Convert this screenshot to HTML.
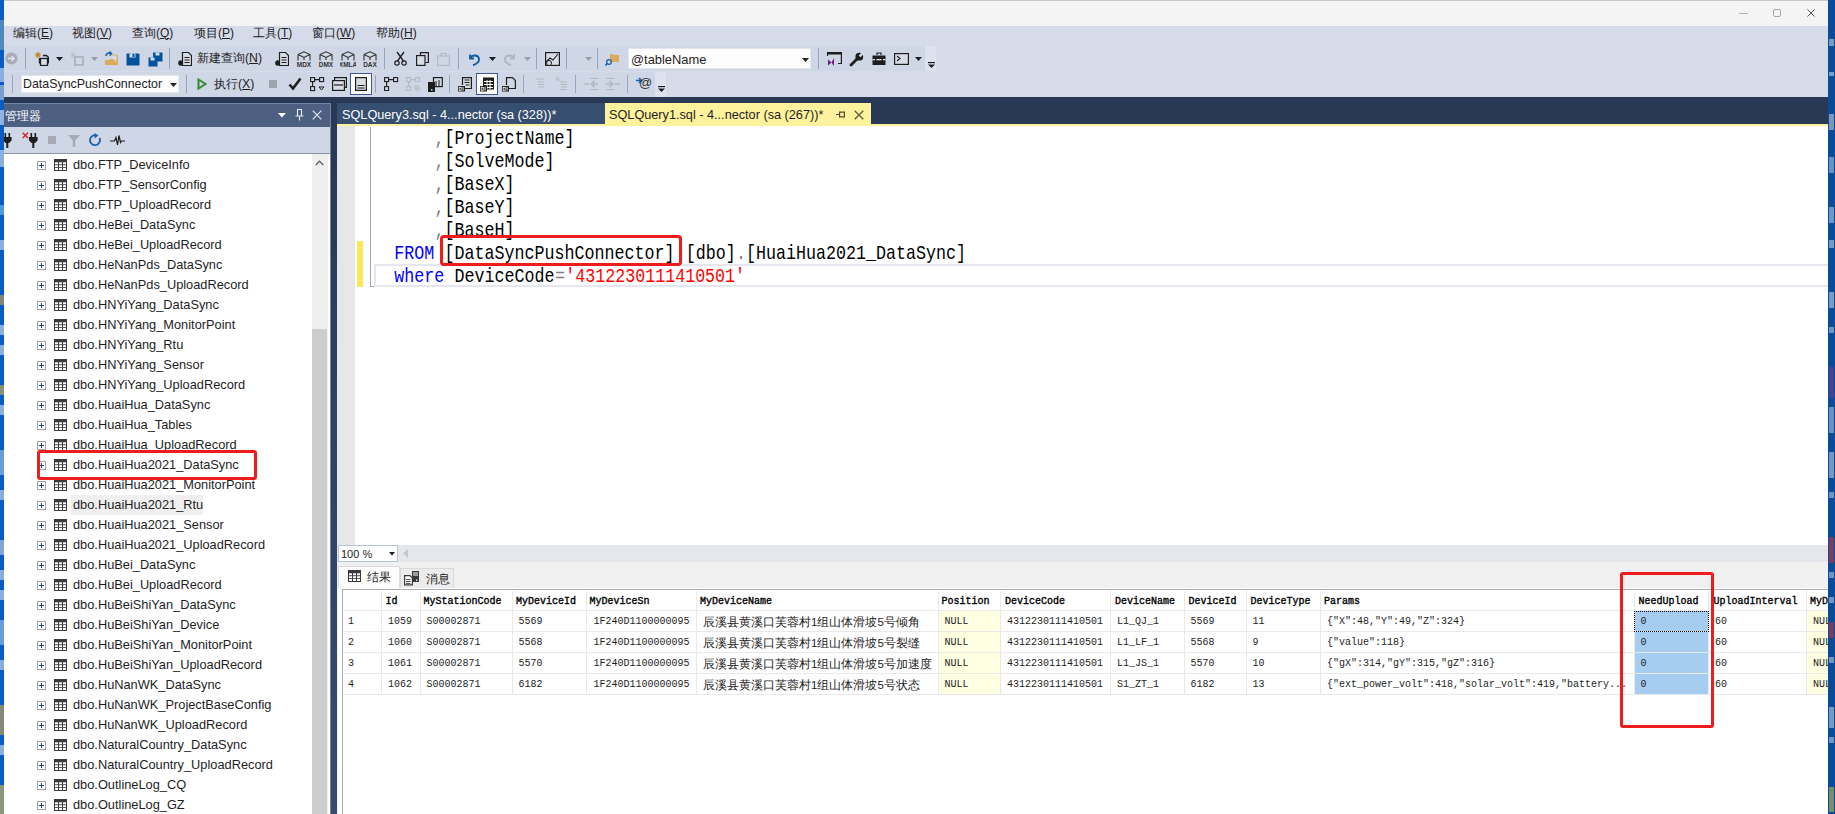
<!DOCTYPE html>
<html><head><meta charset="utf-8">
<style>
*{box-sizing:border-box;margin:0;padding:0}
html,body{width:1835px;height:814px;overflow:hidden;background:#0c4a92;font-family:"Liberation Sans",sans-serif;color:#1e1e1e}
.a{position:absolute}
.t{position:absolute;white-space:pre;line-height:1}
u{text-decoration-thickness:1px;text-underline-offset:1px}
.ui{font-size:12.4px}
.code{font-family:"Liberation Mono",monospace;font-size:16.67px;line-height:23px;white-space:pre;position:absolute;transform:scaleY(1.22);transform-origin:0 16px}
.g{font-family:"Liberation Mono",monospace;font-size:10px;white-space:pre;position:absolute;line-height:1}
.gh{font-family:"Liberation Mono",monospace;font-size:10px;-webkit-text-stroke:0.35px #000;color:#000;white-space:pre;position:absolute;line-height:1}
</style></head><body>

<div class="a" style="left:0px;top:0px;width:1828px;height:814px;background:#d6dbe9"></div>
<div class="a" style="left:0px;top:0px;width:1828px;height:26px;background:#f4f4f4;border-top:1px solid #c9c9c9"></div>
<div class="a" style="left:1739px;top:12.5px;width:9px;height:1.5px;background:#b0b0b0"></div>
<div class="a" style="left:1773px;top:9px;width:8px;height:8px;border:1px solid #a6a6a6;border-radius:2px"></div>
<svg class="a" style="left:1807px;top:9px;" width="8" height="8" viewBox="0 0 8 8"><path d="M0.5 0.5L7.5 7.5M7.5 0.5L0.5 7.5" stroke="#505050" stroke-width="1"/></svg>
<div class="t" style="left:13px;top:26.5px;font-size:12px;line-height:13px;color:#1e1e1e">编辑(<u>E</u>)</div>
<div class="t" style="left:72px;top:26.5px;font-size:12px;line-height:13px;color:#1e1e1e">视图(<u>V</u>)</div>
<div class="t" style="left:132px;top:26.5px;font-size:12px;line-height:13px;color:#1e1e1e">查询(<u>Q</u>)</div>
<div class="t" style="left:194px;top:26.5px;font-size:12px;line-height:13px;color:#1e1e1e">项目(<u>P</u>)</div>
<div class="t" style="left:253px;top:26.5px;font-size:12px;line-height:13px;color:#1e1e1e">工具(<u>T</u>)</div>
<div class="t" style="left:312px;top:26.5px;font-size:12px;line-height:13px;color:#1e1e1e">窗口(<u>W</u>)</div>
<div class="t" style="left:376px;top:26.5px;font-size:12px;line-height:13px;color:#1e1e1e">帮助(<u>H</u>)</div>
<div class="a" style="left:4px;top:46px;width:921px;height:25px;background:#cfd6e5"></div>
<div class="a" style="left:925px;top:46px;width:11px;height:25px;background:#dde2ee"></div>
<div class="a" style="left:4px;top:72px;width:651px;height:25px;background:#cfd6e5"></div>
<div class="a" style="left:655px;top:72px;width:11px;height:25px;background:#dde2ee"></div>
<div class="a" style="left:0px;top:97px;width:1828px;height:717px;background:#293955"></div>
<svg class="a" style="left:5px;top:52px;" width="13" height="13" viewBox="0 0 13 13"><circle cx="6.5" cy="6.5" r="6" fill="#a9acb4"/><path d="M3 6.5H9M6.5 4L9 6.5L6.5 9" stroke="#dfe3ec" stroke-width="1.6" fill="none"/></svg>
<div class="a" style="left:25px;top:48px;width:1px;height:21px;background:#9ba4b9"></div>
<svg class="a" style="left:35px;top:51px;" width="14" height="15" viewBox="0 0 14 15"><path d="M0.8 1.8L5.2 6.2M5.2 1.8L0.8 6.2M3 0.8V7.2M0 4H6" stroke="#c27d0e" stroke-width="0.9"/><circle cx="3" cy="4" r="1.4" fill="#c27d0e"/><path d="M4.5 7V12.5M8 4.5H11.5L13.5 6.5V12.5" stroke="#1e1e1e" stroke-width="1.3" fill="none"/><rect x="5.5" y="7.5" width="7" height="7" fill="#d8dce6" stroke="#1e1e1e" stroke-width="1.3"/></svg>
<svg class="a" style="left:56px;top:57px;" width="7" height="4" viewBox="0 0 7 4"><path d="M0 0H7L3.5 4Z" fill="#1e1e1e"/></svg>
<svg class="a" style="left:70px;top:51px;" width="15" height="15" viewBox="0 0 15 15"><path d="M1 2L5 6M5 2L1 6M3 1V7M0.5 4H5.5" stroke="#b9bdc8" stroke-width="1"/><rect x="5" y="6" width="8" height="8" fill="none" stroke="#a9aeba" stroke-width="1.6"/></svg>
<svg class="a" style="left:91px;top:57px;" width="7" height="4" viewBox="0 0 7 4"><path d="M0 0H7L3.5 4Z" fill="#9a9ea8"/></svg>
<svg class="a" style="left:104px;top:51px;" width="15" height="15" viewBox="0 0 15 15"><path d="M1 9H5L6 8H14V14H1Z" fill="#dcaa5a"/><path d="M6 4H13V12" stroke="#dcaa5a" stroke-width="1.2" fill="#d8dce6"/><path d="M2 5C2 2 5 1.5 7 2.5M5.5 0.5L7.5 2.5L5.5 4.5" stroke="#1b5fa8" stroke-width="1.5" fill="none"/></svg>
<svg class="a" style="left:126px;top:53px;" width="14" height="13" viewBox="0 0 14 13"><path d="M0.5 0.5H12.5L13.5 1.5V12.5H0.5Z" fill="#00539c"/><rect x="3.5" y="0.5" width="6" height="4" fill="#d8dce6"/><rect x="6.5" y="1" width="2" height="3" fill="#00539c"/></svg>
<svg class="a" style="left:148px;top:52px;" width="15" height="15" viewBox="0 0 15 15"><path d="M5 0.5H14.5V9.5H5Z" fill="#00539c"/><rect x="7.5" y="0.5" width="4" height="3" fill="#d8dce6"/><path d="M0.5 5.5H9.5V14.5H0.5Z" fill="#00539c"/><rect x="2.5" y="5.5" width="4" height="3" fill="#d8dce6"/></svg>
<div class="a" style="left:169px;top:48px;width:1px;height:21px;background:#9ba4b9"></div>
<svg class="a" style="left:178px;top:52px;" width="14" height="14" viewBox="0 0 14 14"><path d="M4.5 0.5H10.5L13.5 3.5V13.5H4.5Z" fill="#d8dce6" stroke="#1e1e1e" stroke-width="1.2"/><path d="M6.5 5.5H11.5M6.5 8H11.5M6.5 10.5H11.5" stroke="#1e1e1e" stroke-width="1"/><ellipse cx="2.6" cy="11" rx="2.4" ry="2.8" fill="#1e1e1e"/></svg>
<div class="t" style="left:197px;top:52px;font-size:12.3px;line-height:13px">新建查询(<u>N</u>)</div>
<svg class="a" style="left:275px;top:52px;" width="14" height="14" viewBox="0 0 14 14"><path d="M4.5 0.5H10.5L13.5 3.5V13.5H4.5Z" fill="#d8dce6" stroke="#1e1e1e" stroke-width="1.2"/><path d="M6.5 5.5H11.5M6.5 8H11.5M6.5 10.5H11.5" stroke="#1e1e1e" stroke-width="1"/><ellipse cx="2.6" cy="11" rx="2.4" ry="2.8" fill="#1e1e1e"/></svg>
<svg class="a" style="left:296px;top:51px;" width="16" height="16" viewBox="0 0 16 16"><path d="M2 3.5L8 0.8L14 3.5V9.5M2 3.5V9.5M2 3.5L8 6.5L14 3.5M8 6.5V9" stroke="#333" stroke-width="1.1" fill="#d8dce6"/><text x="8" y="15.5" font-family="Liberation Sans" font-size="6.5" font-weight="bold" text-anchor="middle" fill="#333">MDX</text></svg>
<svg class="a" style="left:318px;top:51px;" width="16" height="16" viewBox="0 0 16 16"><path d="M2 3.5L8 0.8L14 3.5V9.5M2 3.5V9.5M2 3.5L8 6.5L14 3.5M8 6.5V9" stroke="#333" stroke-width="1.1" fill="#d8dce6"/><text x="8" y="15.5" font-family="Liberation Sans" font-size="6.5" font-weight="bold" text-anchor="middle" fill="#333">DMX</text></svg>
<svg class="a" style="left:340px;top:51px;" width="16" height="16" viewBox="0 0 16 16"><path d="M2 3.5L8 0.8L14 3.5V9.5M2 3.5V9.5M2 3.5L8 6.5L14 3.5M8 6.5V9" stroke="#333" stroke-width="1.1" fill="#d8dce6"/><text x="8" y="15.5" font-family="Liberation Sans" font-size="6.5" font-weight="bold" text-anchor="middle" fill="#333">XMLA</text></svg>
<svg class="a" style="left:362px;top:51px;" width="16" height="16" viewBox="0 0 16 16"><path d="M2 3.5L8 0.8L14 3.5V9.5M2 3.5V9.5M2 3.5L8 6.5L14 3.5M8 6.5V9" stroke="#333" stroke-width="1.1" fill="#d8dce6"/><text x="8" y="15.5" font-family="Liberation Sans" font-size="6.5" font-weight="bold" text-anchor="middle" fill="#333">DAX</text></svg>
<div class="a" style="left:384px;top:48px;width:1px;height:21px;background:#9ba4b9"></div>
<svg class="a" style="left:394px;top:51px;" width="13" height="15" viewBox="0 0 13 15"><path d="M3 1L9.5 10M10 1L3.5 10" stroke="#1e1e1e" stroke-width="1.3"/><circle cx="3" cy="12" r="2.2" fill="none" stroke="#1e1e1e" stroke-width="1.2"/><circle cx="10" cy="12" r="2.2" fill="none" stroke="#1e1e1e" stroke-width="1.2"/></svg>
<svg class="a" style="left:416px;top:52px;" width="13" height="14" viewBox="0 0 13 14"><path d="M4.5 3V0.6H12.4V10.5H9.5" stroke="#1e1e1e" stroke-width="1.2" fill="none"/><rect x="0.6" y="3.6" width="8.4" height="9.8" fill="#d8dce6" stroke="#1e1e1e" stroke-width="1.2"/></svg>
<svg class="a" style="left:437px;top:52px;" width="13" height="14" viewBox="0 0 13 14"><rect x="0.6" y="4" width="11.8" height="9.4" fill="none" stroke="#b4b9c4" stroke-width="1.2"/><path d="M4 4V1.5H9V4" stroke="#b4b9c4" stroke-width="1.2" fill="none"/></svg>
<div class="a" style="left:458px;top:48px;width:1px;height:21px;background:#9ba4b9"></div>
<svg class="a" style="left:467px;top:52px;" width="14" height="14" viewBox="0 0 14 14"><path d="M3 2.5V6.5H7" stroke="#0e5aa8" stroke-width="1.8" fill="none"/><path d="M3.5 6C5 2.5 11.5 2.5 12 7C12.3 10 9 12.5 6 13.2" stroke="#0e5aa8" stroke-width="1.8" fill="none"/></svg>
<svg class="a" style="left:489px;top:57px;" width="7" height="4" viewBox="0 0 7 4"><path d="M0 0H7L3.5 4Z" fill="#1e1e1e"/></svg>
<svg class="a" style="left:503px;top:52px;" width="14" height="14" viewBox="0 0 14 14"><path d="M11 2.5V6.5H7" stroke="#b0b4be" stroke-width="1.8" fill="none"/><path d="M10.5 6C9 2.5 2.5 2.5 2 7C1.7 10 5 12.5 8 13.2" stroke="#b0b4be" stroke-width="1.8" fill="none"/></svg>
<svg class="a" style="left:524px;top:57px;" width="7" height="4" viewBox="0 0 7 4"><path d="M0 0H7L3.5 4Z" fill="#9a9ea8"/></svg>
<div class="a" style="left:536px;top:48px;width:1px;height:21px;background:#9ba4b9"></div>
<svg class="a" style="left:545px;top:52px;" width="15" height="14" viewBox="0 0 15 14"><rect x="0.6" y="0.6" width="13.8" height="12.8" fill="#d8dce6" stroke="#1e1e1e" stroke-width="1.2"/><path d="M1 10L5 6L8 8L13 2" stroke="#1e1e1e" stroke-width="1.1" fill="none"/><circle cx="4" cy="11" r="2.5" fill="#d8dce6" stroke="#1e1e1e" stroke-width="1"/></svg>
<div class="a" style="left:566px;top:48px;width:1px;height:21px;background:#9ba4b9"></div>
<svg class="a" style="left:585px;top:57px;" width="7" height="4" viewBox="0 0 7 4"><path d="M0 0H7L3.5 4Z" fill="#9a9ea8"/></svg>
<div class="a" style="left:597px;top:48px;width:1px;height:21px;background:#9ba4b9"></div>
<svg class="a" style="left:605px;top:52px;" width="15" height="15" viewBox="0 0 15 15"><path d="M5 2H8L9 3H14V10H5Z" fill="#dcaa5a"/><circle cx="4" cy="10" r="2.3" fill="none" stroke="#1b5fa8" stroke-width="1.3"/><path d="M2.5 11.5L0.5 13.5" stroke="#1b5fa8" stroke-width="1.6"/></svg>
<div class="a" style="left:628px;top:48px;width:183px;height:21px;background:#fdfdfd;border:1px solid #e2e6ee"></div>
<div class="t" style="left:631px;top:53px;font-size:12.9px;line-height:13px">@tableName</div>
<svg class="a" style="left:802px;top:58px;" width="7" height="4" viewBox="0 0 7 4"><path d="M0 0H7L3.5 4Z" fill="#1e1e1e"/></svg>
<div class="a" style="left:818px;top:48px;width:1px;height:21px;background:#9ba4b9"></div>
<svg class="a" style="left:827px;top:52px;" width="15" height="14" viewBox="0 0 15 14"><path d="M0.5 4V0.6H14.4V11.5H11" stroke="#1e1e1e" stroke-width="1.2" fill="none"/><rect x="0.5" y="0.5" width="14" height="2" fill="#1e1e1e"/><path d="M1 7.5L4.5 10.5L1 13.5ZM7 6V14L4.5 10.5Z" fill="#68217a"/></svg>
<svg class="a" style="left:849px;top:52px;" width="15" height="15" viewBox="0 0 15 15"><path d="M2 13L8.5 6.5" stroke="#1e1e1e" stroke-width="2.8" stroke-linecap="round"/><circle cx="10.3" cy="4.7" r="3.9" fill="#1e1e1e"/><path d="M10.6 4.4L15 0" stroke="#cfd6e5" stroke-width="2.6"/></svg>
<svg class="a" style="left:872px;top:52px;" width="14" height="14" viewBox="0 0 14 14"><path d="M5 3V1H9V3" stroke="#1e1e1e" stroke-width="1.2" fill="none"/><rect x="0.5" y="3.5" width="13" height="9.5" fill="#1e1e1e"/><rect x="0.5" y="7" width="13" height="1.3" fill="#d8dce6"/><rect x="3" y="6" width="1.4" height="3" fill="#1e1e1e"/><rect x="9.6" y="6" width="1.4" height="3" fill="#1e1e1e"/></svg>
<svg class="a" style="left:894px;top:53px;" width="15" height="12" viewBox="0 0 15 12"><rect x="0.6" y="0.6" width="13.8" height="10.8" fill="#d8dce6" stroke="#1e1e1e" stroke-width="1.2"/><path d="M3 3L6 5.5L3 8" stroke="#1e1e1e" stroke-width="1.1" fill="none"/></svg>
<svg class="a" style="left:915px;top:57px;" width="7" height="4" viewBox="0 0 7 4"><path d="M0 0H7L3.5 4Z" fill="#1e1e1e"/></svg>
<svg class="a" style="left:928px;top:62px;" width="7" height="6" viewBox="0 0 7 6"><rect x="0" y="0" width="7" height="1.2" fill="#1e1e1e"/><path d="M0 2.5H7L3.5 6Z" fill="#1e1e1e"/></svg>
<div class="a" style="left:12px;top:75px;width:1px;height:18px;background:#9ba4b9"></div>
<div class="a" style="left:21px;top:75px;width:158px;height:18px;background:#fdfdfd;border:1px solid #e2e6ee"></div>
<div class="t" style="left:23px;top:78px;font-size:12.4px;line-height:13px">DataSyncPushConnector</div>
<svg class="a" style="left:170px;top:83px;" width="7" height="4" viewBox="0 0 7 4"><path d="M0 0H7L3.5 4Z" fill="#1e1e1e"/></svg>
<div class="a" style="left:186px;top:75px;width:1px;height:18px;background:#9ba4b9"></div>
<svg class="a" style="left:197px;top:78px;" width="10" height="12" viewBox="0 0 10 12"><path d="M1.5 1.5L8.5 6L1.5 10.5Z" fill="none" stroke="#388a34" stroke-width="2"/></svg>
<div class="t" style="left:214px;top:78px;font-size:12.3px;line-height:13px">执行(<u>X</u>)</div>
<div class="a" style="left:269px;top:80px;width:8px;height:8px;background:#a0a4ae"></div>
<svg class="a" style="left:288px;top:77px;" width="14" height="14" viewBox="0 0 14 14"><path d="M1.5 7.5L5 11.5L12.5 1.5" stroke="#1e1e1e" stroke-width="2.6" fill="none"/></svg>
<svg class="a" style="left:310px;top:77px;" width="15" height="15" viewBox="0 0 15 15"><rect x="0.6" y="0.6" width="4" height="4" fill="none" stroke="#1e1e1e" stroke-width="1.1"/><rect x="9.6" y="0.6" width="4" height="4" fill="none" stroke="#1e1e1e" stroke-width="1.1"/><rect x="0.6" y="9.6" width="4" height="4" fill="none" stroke="#1e1e1e" stroke-width="1.1"/><path d="M4.5 2.6H9.5M2.6 4.5V9.5" stroke="#1e1e1e" stroke-width="1.1"/><path d="M9 10H14L11.5 13Z" fill="none" stroke="#1e1e1e" stroke-width="1"/></svg>
<svg class="a" style="left:332px;top:77px;" width="15" height="14" viewBox="0 0 15 14"><rect x="2.6" y="0.6" width="11.8" height="9.8" fill="none" stroke="#1e1e1e" stroke-width="1.2"/><rect x="0.6" y="3.6" width="11.8" height="9.8" fill="#d8dce6" stroke="#1e1e1e" stroke-width="1.2"/><path d="M2 8H11" stroke="#1e1e1e" stroke-width="1.2"/></svg>
<div class="a" style="left:350px;top:73px;width:22px;height:22px;background:#fdfbf6;border:1px solid #3e5a8e"></div>
<svg class="a" style="left:355px;top:77px;" width="12" height="14" viewBox="0 0 12 14"><rect x="0.6" y="0.6" width="10.8" height="12.8" fill="#d8dce6" stroke="#1e1e1e" stroke-width="1.2"/><path d="M2.5 8.5H9.5M2.5 11H9.5" stroke="#1e1e1e" stroke-width="1"/></svg>
<div class="a" style="left:375px;top:75px;width:1px;height:18px;background:#9ba4b9"></div>
<svg class="a" style="left:384px;top:77px;" width="15" height="14" viewBox="0 0 15 14"><rect x="0.6" y="0.6" width="4" height="4" fill="none" stroke="#1e1e1e" stroke-width="1.1"/><rect x="9.6" y="0.6" width="4" height="4" fill="none" stroke="#1e1e1e" stroke-width="1.1"/><rect x="0.6" y="9.6" width="4" height="4" fill="none" stroke="#1e1e1e" stroke-width="1.1"/><path d="M4.5 2.6H9.5M2.6 4.5V9.5" stroke="#1e1e1e" stroke-width="1.1"/></svg>
<svg class="a" style="left:406px;top:77px;" width="15" height="14" viewBox="0 0 15 14"><rect x="0.6" y="0.6" width="4" height="4" fill="none" stroke="#b4b9c4" stroke-width="1.1"/><rect x="9.6" y="0.6" width="4" height="4" fill="none" stroke="#b4b9c4" stroke-width="1.1"/><rect x="0.6" y="9.6" width="4" height="4" fill="none" stroke="#b4b9c4" stroke-width="1.1"/><path d="M4.5 2.6H9.5M2.6 4.5V9.5" stroke="#b4b9c4" stroke-width="1.1"/><circle cx="11" cy="11" r="3" fill="#c0c4cc"/></svg>
<svg class="a" style="left:428px;top:77px;" width="15" height="15" viewBox="0 0 15 15"><rect x="0" y="5" width="7" height="10" fill="#1e1e1e"/><rect x="5.5" y="0.6" width="8.8" height="9" fill="none" stroke="#1e1e1e" stroke-width="1.2"/><path d="M8 4V9M11 3V9" stroke="#1e1e1e" stroke-width="1"/><rect x="3" y="12" width="1.5" height="1.5" fill="#d8dce6"/></svg>
<div class="a" style="left:449px;top:75px;width:1px;height:18px;background:#9ba4b9"></div>
<svg class="a" style="left:458px;top:77px;" width="15" height="15" viewBox="0 0 15 15"><path d="M4.5 8V0.6H13.4V11.5H7" stroke="#1e1e1e" stroke-width="1.2" fill="#d8dce6"/><path d="M6.5 3H11.5M6.5 5.5H11.5M7.5 8H11.5" stroke="#1e1e1e" stroke-width="1"/><rect x="0" y="9" width="7" height="5.5" fill="#1e1e1e"/><rect x="1.2" y="10.3" width="2" height="3" fill="none" stroke="#fff" stroke-width="0.8"/><rect x="4.6" y="10" width="0.9" height="3.6" fill="#fff"/></svg>
<div class="a" style="left:476px;top:73px;width:22px;height:22px;background:#fdfbf6;border:1px solid #3e5a8e"></div>
<svg class="a" style="left:480px;top:77px;" width="15" height="15" viewBox="0 0 15 15"><rect x="3" y="0.5" width="11" height="12" fill="#1e1e1e"/><path d="M4 4.5H13M4 7.5H13M4 10.5H13M7 3V12M10 3V12" stroke="#fdfbf6" stroke-width="1"/><rect x="0" y="9" width="7" height="5.5" fill="#1e1e1e"/><rect x="1.2" y="10.3" width="2" height="3" fill="none" stroke="#fff" stroke-width="0.8"/><rect x="4.6" y="10" width="0.9" height="3.6" fill="#fff"/></svg>
<svg class="a" style="left:502px;top:77px;" width="15" height="15" viewBox="0 0 15 15"><path d="M4.5 8V0.6H10.5L13.4 3.5V11.5H7" stroke="#1e1e1e" stroke-width="1.2" fill="none"/><rect x="0" y="9" width="7" height="5.5" fill="#1e1e1e"/><rect x="1.2" y="10.3" width="2" height="3" fill="none" stroke="#fff" stroke-width="0.8"/><rect x="4.6" y="10" width="0.9" height="3.6" fill="#fff"/></svg>
<div class="a" style="left:523px;top:75px;width:1px;height:18px;background:#9ba4b9"></div>
<svg class="a" style="left:534px;top:78px;" width="11" height="11" viewBox="0 0 11 11"><path d="M2 1H10M4 4H10M4 6.5H10M4 9H10" stroke="#b4b9c4" stroke-width="1.2"/></svg>
<svg class="a" style="left:555px;top:77px;" width="13" height="13" viewBox="0 0 13 13"><path d="M1 3C1 0.5 4 0.5 4 3L3 4" stroke="#b4b9c4" stroke-width="1.1" fill="none"/><path d="M5 5H12M6 7.5H12M6 10H12M5 12.5H12" stroke="#b4b9c4" stroke-width="1.1"/></svg>
<div class="a" style="left:575px;top:75px;width:1px;height:18px;background:#9ba4b9"></div>
<svg class="a" style="left:584px;top:77px;" width="15" height="14" viewBox="0 0 15 14"><path d="M6 1.4H14M0 7H5.5M7.5 7H14M6 12.6H14" stroke="#b4b9c4" stroke-width="1.3" fill="none"/><path d="M10.5 4L7.5 7L10.5 10" stroke="#b4b9c4" stroke-width="1.8" fill="none"/></svg>
<svg class="a" style="left:606px;top:77px;" width="15" height="14" viewBox="0 0 15 14"><path d="M0 1.4H8M0 7H6.5M8.5 7H14M0 12.6H8" stroke="#b4b9c4" stroke-width="1.3" fill="none"/><path d="M3.5 4L6.5 7L3.5 10" stroke="#b4b9c4" stroke-width="1.8" fill="none"/></svg>
<div class="a" style="left:627px;top:75px;width:1px;height:18px;background:#9ba4b9"></div>
<svg class="a" style="left:636px;top:77px;" width="7" height="7" viewBox="0 0 7 7"><path d="M0 3.5H5M3 1L5.5 3.5L3 6" stroke="#1b5fa8" stroke-width="1.6" fill="none"/></svg>
<div class="t" style="left:639px;top:76px;font-size:13px;line-height:14px;color:#333">@</div>
<svg class="a" style="left:658px;top:86px;" width="7" height="6" viewBox="0 0 7 6"><rect x="0" y="0" width="7" height="1.2" fill="#1e1e1e"/><path d="M0 2.5H7L3.5 6Z" fill="#1e1e1e"/></svg>
<div class="a" style="left:4px;top:103px;width:327px;height:711px;background:#4d6082;border:1px solid #7585a5;border-left:none"></div>
<div class="t" style="left:5px;top:110px;font-size:12px;line-height:13px;color:#fff">管理器</div>
<svg class="a" style="left:278px;top:113px;" width="8" height="5" viewBox="0 0 8 5"><path d="M0 0H8L4 4.5Z" fill="#fff"/></svg>
<svg class="a" style="left:295px;top:109px;" width="9" height="12" viewBox="0 0 9 12"><path d="M2 0.5H7M2.5 1V6.5M6.5 1V6.5M0.5 7H8.5M4.5 7V11.5" stroke="#e8ecf4" stroke-width="1.1" fill="none"/></svg>
<svg class="a" style="left:312px;top:110px;" width="10" height="10" viewBox="0 0 10 10"><path d="M0.7 0.7L9.3 9.3M9.3 0.7L0.7 9.3" stroke="#e8ecf4" stroke-width="1.1"/></svg>
<div class="a" style="left:4px;top:127px;width:326px;height:27px;background:#cfd6e5;border-bottom:1px solid #8e96a6"></div>
<svg class="a" style="left:3px;top:133px;" width="9" height="15" viewBox="0 0 9 15"><rect x="1.5" y="0" width="1.6" height="4" fill="#1e1e1e"/><rect x="5.5" y="0" width="1.6" height="4" fill="#1e1e1e"/><path d="M0 4H8.6V7.5L6 10H2.6L0 7.5Z" fill="#1e1e1e"/><rect x="3.3" y="9" width="2" height="6" fill="#1e1e1e"/></svg>
<svg class="a" style="left:22px;top:132px;" width="7" height="7" viewBox="0 0 7 7"><path d="M0.7 0.7L6 6M6 0.7L0.7 6" stroke="#d02020" stroke-width="1.3"/></svg>
<svg class="a" style="left:29px;top:133px;" width="9" height="15" viewBox="0 0 9 15"><rect x="1.5" y="0" width="1.6" height="4" fill="#1e1e1e"/><rect x="5.5" y="0" width="1.6" height="4" fill="#1e1e1e"/><path d="M0 4H8.6V7.5L6 10H2.6L0 7.5Z" fill="#1e1e1e"/><rect x="3.3" y="9" width="2" height="6" fill="#1e1e1e"/></svg>
<div class="a" style="left:48px;top:136px;width:8px;height:8px;background:#a6aab4"></div>
<svg class="a" style="left:68px;top:135px;" width="12" height="12" viewBox="0 0 12 12"><path d="M0 0H12L7.2 5.5V12H4.8V5.5Z" fill="#a6aab4"/></svg>
<svg class="a" style="left:89px;top:133px;" width="13" height="14" viewBox="0 0 13 14"><path d="M10.5 5A5 5 0 1 1 6.5 2.2" stroke="#1b5fa8" stroke-width="1.8" fill="none"/><path d="M5.5 0L9.5 2.5L5.5 5.5Z" fill="#1b5fa8"/></svg>
<svg class="a" style="left:110px;top:134px;" width="15" height="12" viewBox="0 0 15 12"><path d="M0 7H4.5L6 3.5L7.5 11L9 1.5L10.5 8.5L11.5 7H15" stroke="#1e1e1e" stroke-width="1.2" fill="none"/></svg>
<div class="a" style="left:4px;top:154px;width:308px;height:660px;background:#fff"></div>
<div class="a" style="left:312px;top:154px;width:16px;height:660px;background:#efefef"></div>
<svg class="a" style="left:315px;top:160px;" width="9" height="6" viewBox="0 0 9 6"><path d="M0.8 5L4.5 1.2L8.2 5" stroke="#606060" stroke-width="1.3" fill="none"/></svg>
<div class="a" style="left:312px;top:329px;width:15px;height:485px;background:#cdcdcd"></div>
<div class="a" style="left:328px;top:154px;width:2px;height:660px;background:#fff"></div>
<svg class="a" style="left:37px;top:161px;" width="9" height="9" viewBox="0 0 9 9"><rect x="0.5" y="0.5" width="8" height="8" fill="#fff" stroke="#a4a4a4"/><path d="M2 4.5H7M4.5 2V7" stroke="#1e3f8a" stroke-width="1"/></svg>
<svg class="a" style="left:54px;top:159px;" width="13" height="12" viewBox="0 0 13 12"><rect x="0" y="0" width="13" height="12" fill="#3a3a3a"/><rect x="1" y="3.3" width="3" height="2" fill="#fff"/><rect x="1" y="6.2" width="3" height="2" fill="#fff"/><rect x="1" y="9" width="3" height="2" fill="#fff"/><rect x="5" y="3.3" width="3" height="2" fill="#fff"/><rect x="5" y="6.2" width="3" height="2" fill="#fff"/><rect x="5" y="9" width="3" height="2" fill="#fff"/><rect x="9" y="3.3" width="3" height="2" fill="#fff"/><rect x="9" y="6.2" width="3" height="2" fill="#fff"/><rect x="9" y="9" width="3" height="2" fill="#fff"/></svg>
<div class="t" style="left:73px;top:158px;font-size:12.8px;line-height:14px">dbo.FTP_DeviceInfo</div>
<svg class="a" style="left:37px;top:181px;" width="9" height="9" viewBox="0 0 9 9"><rect x="0.5" y="0.5" width="8" height="8" fill="#fff" stroke="#a4a4a4"/><path d="M2 4.5H7M4.5 2V7" stroke="#1e3f8a" stroke-width="1"/></svg>
<svg class="a" style="left:54px;top:179px;" width="13" height="12" viewBox="0 0 13 12"><rect x="0" y="0" width="13" height="12" fill="#3a3a3a"/><rect x="1" y="3.3" width="3" height="2" fill="#fff"/><rect x="1" y="6.2" width="3" height="2" fill="#fff"/><rect x="1" y="9" width="3" height="2" fill="#fff"/><rect x="5" y="3.3" width="3" height="2" fill="#fff"/><rect x="5" y="6.2" width="3" height="2" fill="#fff"/><rect x="5" y="9" width="3" height="2" fill="#fff"/><rect x="9" y="3.3" width="3" height="2" fill="#fff"/><rect x="9" y="6.2" width="3" height="2" fill="#fff"/><rect x="9" y="9" width="3" height="2" fill="#fff"/></svg>
<div class="t" style="left:73px;top:178px;font-size:12.8px;line-height:14px">dbo.FTP_SensorConfig</div>
<svg class="a" style="left:37px;top:201px;" width="9" height="9" viewBox="0 0 9 9"><rect x="0.5" y="0.5" width="8" height="8" fill="#fff" stroke="#a4a4a4"/><path d="M2 4.5H7M4.5 2V7" stroke="#1e3f8a" stroke-width="1"/></svg>
<svg class="a" style="left:54px;top:199px;" width="13" height="12" viewBox="0 0 13 12"><rect x="0" y="0" width="13" height="12" fill="#3a3a3a"/><rect x="1" y="3.3" width="3" height="2" fill="#fff"/><rect x="1" y="6.2" width="3" height="2" fill="#fff"/><rect x="1" y="9" width="3" height="2" fill="#fff"/><rect x="5" y="3.3" width="3" height="2" fill="#fff"/><rect x="5" y="6.2" width="3" height="2" fill="#fff"/><rect x="5" y="9" width="3" height="2" fill="#fff"/><rect x="9" y="3.3" width="3" height="2" fill="#fff"/><rect x="9" y="6.2" width="3" height="2" fill="#fff"/><rect x="9" y="9" width="3" height="2" fill="#fff"/></svg>
<div class="t" style="left:73px;top:198px;font-size:12.8px;line-height:14px">dbo.FTP_UploadRecord</div>
<svg class="a" style="left:37px;top:221px;" width="9" height="9" viewBox="0 0 9 9"><rect x="0.5" y="0.5" width="8" height="8" fill="#fff" stroke="#a4a4a4"/><path d="M2 4.5H7M4.5 2V7" stroke="#1e3f8a" stroke-width="1"/></svg>
<svg class="a" style="left:54px;top:219px;" width="13" height="12" viewBox="0 0 13 12"><rect x="0" y="0" width="13" height="12" fill="#3a3a3a"/><rect x="1" y="3.3" width="3" height="2" fill="#fff"/><rect x="1" y="6.2" width="3" height="2" fill="#fff"/><rect x="1" y="9" width="3" height="2" fill="#fff"/><rect x="5" y="3.3" width="3" height="2" fill="#fff"/><rect x="5" y="6.2" width="3" height="2" fill="#fff"/><rect x="5" y="9" width="3" height="2" fill="#fff"/><rect x="9" y="3.3" width="3" height="2" fill="#fff"/><rect x="9" y="6.2" width="3" height="2" fill="#fff"/><rect x="9" y="9" width="3" height="2" fill="#fff"/></svg>
<div class="t" style="left:73px;top:218px;font-size:12.8px;line-height:14px">dbo.HeBei_DataSync</div>
<svg class="a" style="left:37px;top:241px;" width="9" height="9" viewBox="0 0 9 9"><rect x="0.5" y="0.5" width="8" height="8" fill="#fff" stroke="#a4a4a4"/><path d="M2 4.5H7M4.5 2V7" stroke="#1e3f8a" stroke-width="1"/></svg>
<svg class="a" style="left:54px;top:239px;" width="13" height="12" viewBox="0 0 13 12"><rect x="0" y="0" width="13" height="12" fill="#3a3a3a"/><rect x="1" y="3.3" width="3" height="2" fill="#fff"/><rect x="1" y="6.2" width="3" height="2" fill="#fff"/><rect x="1" y="9" width="3" height="2" fill="#fff"/><rect x="5" y="3.3" width="3" height="2" fill="#fff"/><rect x="5" y="6.2" width="3" height="2" fill="#fff"/><rect x="5" y="9" width="3" height="2" fill="#fff"/><rect x="9" y="3.3" width="3" height="2" fill="#fff"/><rect x="9" y="6.2" width="3" height="2" fill="#fff"/><rect x="9" y="9" width="3" height="2" fill="#fff"/></svg>
<div class="t" style="left:73px;top:238px;font-size:12.8px;line-height:14px">dbo.HeBei_UploadRecord</div>
<svg class="a" style="left:37px;top:261px;" width="9" height="9" viewBox="0 0 9 9"><rect x="0.5" y="0.5" width="8" height="8" fill="#fff" stroke="#a4a4a4"/><path d="M2 4.5H7M4.5 2V7" stroke="#1e3f8a" stroke-width="1"/></svg>
<svg class="a" style="left:54px;top:259px;" width="13" height="12" viewBox="0 0 13 12"><rect x="0" y="0" width="13" height="12" fill="#3a3a3a"/><rect x="1" y="3.3" width="3" height="2" fill="#fff"/><rect x="1" y="6.2" width="3" height="2" fill="#fff"/><rect x="1" y="9" width="3" height="2" fill="#fff"/><rect x="5" y="3.3" width="3" height="2" fill="#fff"/><rect x="5" y="6.2" width="3" height="2" fill="#fff"/><rect x="5" y="9" width="3" height="2" fill="#fff"/><rect x="9" y="3.3" width="3" height="2" fill="#fff"/><rect x="9" y="6.2" width="3" height="2" fill="#fff"/><rect x="9" y="9" width="3" height="2" fill="#fff"/></svg>
<div class="t" style="left:73px;top:258px;font-size:12.8px;line-height:14px">dbo.HeNanPds_DataSync</div>
<svg class="a" style="left:37px;top:281px;" width="9" height="9" viewBox="0 0 9 9"><rect x="0.5" y="0.5" width="8" height="8" fill="#fff" stroke="#a4a4a4"/><path d="M2 4.5H7M4.5 2V7" stroke="#1e3f8a" stroke-width="1"/></svg>
<svg class="a" style="left:54px;top:279px;" width="13" height="12" viewBox="0 0 13 12"><rect x="0" y="0" width="13" height="12" fill="#3a3a3a"/><rect x="1" y="3.3" width="3" height="2" fill="#fff"/><rect x="1" y="6.2" width="3" height="2" fill="#fff"/><rect x="1" y="9" width="3" height="2" fill="#fff"/><rect x="5" y="3.3" width="3" height="2" fill="#fff"/><rect x="5" y="6.2" width="3" height="2" fill="#fff"/><rect x="5" y="9" width="3" height="2" fill="#fff"/><rect x="9" y="3.3" width="3" height="2" fill="#fff"/><rect x="9" y="6.2" width="3" height="2" fill="#fff"/><rect x="9" y="9" width="3" height="2" fill="#fff"/></svg>
<div class="t" style="left:73px;top:278px;font-size:12.8px;line-height:14px">dbo.HeNanPds_UploadRecord</div>
<svg class="a" style="left:37px;top:301px;" width="9" height="9" viewBox="0 0 9 9"><rect x="0.5" y="0.5" width="8" height="8" fill="#fff" stroke="#a4a4a4"/><path d="M2 4.5H7M4.5 2V7" stroke="#1e3f8a" stroke-width="1"/></svg>
<svg class="a" style="left:54px;top:299px;" width="13" height="12" viewBox="0 0 13 12"><rect x="0" y="0" width="13" height="12" fill="#3a3a3a"/><rect x="1" y="3.3" width="3" height="2" fill="#fff"/><rect x="1" y="6.2" width="3" height="2" fill="#fff"/><rect x="1" y="9" width="3" height="2" fill="#fff"/><rect x="5" y="3.3" width="3" height="2" fill="#fff"/><rect x="5" y="6.2" width="3" height="2" fill="#fff"/><rect x="5" y="9" width="3" height="2" fill="#fff"/><rect x="9" y="3.3" width="3" height="2" fill="#fff"/><rect x="9" y="6.2" width="3" height="2" fill="#fff"/><rect x="9" y="9" width="3" height="2" fill="#fff"/></svg>
<div class="t" style="left:73px;top:298px;font-size:12.8px;line-height:14px">dbo.HNYiYang_DataSync</div>
<svg class="a" style="left:37px;top:321px;" width="9" height="9" viewBox="0 0 9 9"><rect x="0.5" y="0.5" width="8" height="8" fill="#fff" stroke="#a4a4a4"/><path d="M2 4.5H7M4.5 2V7" stroke="#1e3f8a" stroke-width="1"/></svg>
<svg class="a" style="left:54px;top:319px;" width="13" height="12" viewBox="0 0 13 12"><rect x="0" y="0" width="13" height="12" fill="#3a3a3a"/><rect x="1" y="3.3" width="3" height="2" fill="#fff"/><rect x="1" y="6.2" width="3" height="2" fill="#fff"/><rect x="1" y="9" width="3" height="2" fill="#fff"/><rect x="5" y="3.3" width="3" height="2" fill="#fff"/><rect x="5" y="6.2" width="3" height="2" fill="#fff"/><rect x="5" y="9" width="3" height="2" fill="#fff"/><rect x="9" y="3.3" width="3" height="2" fill="#fff"/><rect x="9" y="6.2" width="3" height="2" fill="#fff"/><rect x="9" y="9" width="3" height="2" fill="#fff"/></svg>
<div class="t" style="left:73px;top:318px;font-size:12.8px;line-height:14px">dbo.HNYiYang_MonitorPoint</div>
<svg class="a" style="left:37px;top:341px;" width="9" height="9" viewBox="0 0 9 9"><rect x="0.5" y="0.5" width="8" height="8" fill="#fff" stroke="#a4a4a4"/><path d="M2 4.5H7M4.5 2V7" stroke="#1e3f8a" stroke-width="1"/></svg>
<svg class="a" style="left:54px;top:339px;" width="13" height="12" viewBox="0 0 13 12"><rect x="0" y="0" width="13" height="12" fill="#3a3a3a"/><rect x="1" y="3.3" width="3" height="2" fill="#fff"/><rect x="1" y="6.2" width="3" height="2" fill="#fff"/><rect x="1" y="9" width="3" height="2" fill="#fff"/><rect x="5" y="3.3" width="3" height="2" fill="#fff"/><rect x="5" y="6.2" width="3" height="2" fill="#fff"/><rect x="5" y="9" width="3" height="2" fill="#fff"/><rect x="9" y="3.3" width="3" height="2" fill="#fff"/><rect x="9" y="6.2" width="3" height="2" fill="#fff"/><rect x="9" y="9" width="3" height="2" fill="#fff"/></svg>
<div class="t" style="left:73px;top:338px;font-size:12.8px;line-height:14px">dbo.HNYiYang_Rtu</div>
<svg class="a" style="left:37px;top:361px;" width="9" height="9" viewBox="0 0 9 9"><rect x="0.5" y="0.5" width="8" height="8" fill="#fff" stroke="#a4a4a4"/><path d="M2 4.5H7M4.5 2V7" stroke="#1e3f8a" stroke-width="1"/></svg>
<svg class="a" style="left:54px;top:359px;" width="13" height="12" viewBox="0 0 13 12"><rect x="0" y="0" width="13" height="12" fill="#3a3a3a"/><rect x="1" y="3.3" width="3" height="2" fill="#fff"/><rect x="1" y="6.2" width="3" height="2" fill="#fff"/><rect x="1" y="9" width="3" height="2" fill="#fff"/><rect x="5" y="3.3" width="3" height="2" fill="#fff"/><rect x="5" y="6.2" width="3" height="2" fill="#fff"/><rect x="5" y="9" width="3" height="2" fill="#fff"/><rect x="9" y="3.3" width="3" height="2" fill="#fff"/><rect x="9" y="6.2" width="3" height="2" fill="#fff"/><rect x="9" y="9" width="3" height="2" fill="#fff"/></svg>
<div class="t" style="left:73px;top:358px;font-size:12.8px;line-height:14px">dbo.HNYiYang_Sensor</div>
<svg class="a" style="left:37px;top:381px;" width="9" height="9" viewBox="0 0 9 9"><rect x="0.5" y="0.5" width="8" height="8" fill="#fff" stroke="#a4a4a4"/><path d="M2 4.5H7M4.5 2V7" stroke="#1e3f8a" stroke-width="1"/></svg>
<svg class="a" style="left:54px;top:379px;" width="13" height="12" viewBox="0 0 13 12"><rect x="0" y="0" width="13" height="12" fill="#3a3a3a"/><rect x="1" y="3.3" width="3" height="2" fill="#fff"/><rect x="1" y="6.2" width="3" height="2" fill="#fff"/><rect x="1" y="9" width="3" height="2" fill="#fff"/><rect x="5" y="3.3" width="3" height="2" fill="#fff"/><rect x="5" y="6.2" width="3" height="2" fill="#fff"/><rect x="5" y="9" width="3" height="2" fill="#fff"/><rect x="9" y="3.3" width="3" height="2" fill="#fff"/><rect x="9" y="6.2" width="3" height="2" fill="#fff"/><rect x="9" y="9" width="3" height="2" fill="#fff"/></svg>
<div class="t" style="left:73px;top:378px;font-size:12.8px;line-height:14px">dbo.HNYiYang_UploadRecord</div>
<svg class="a" style="left:37px;top:401px;" width="9" height="9" viewBox="0 0 9 9"><rect x="0.5" y="0.5" width="8" height="8" fill="#fff" stroke="#a4a4a4"/><path d="M2 4.5H7M4.5 2V7" stroke="#1e3f8a" stroke-width="1"/></svg>
<svg class="a" style="left:54px;top:399px;" width="13" height="12" viewBox="0 0 13 12"><rect x="0" y="0" width="13" height="12" fill="#3a3a3a"/><rect x="1" y="3.3" width="3" height="2" fill="#fff"/><rect x="1" y="6.2" width="3" height="2" fill="#fff"/><rect x="1" y="9" width="3" height="2" fill="#fff"/><rect x="5" y="3.3" width="3" height="2" fill="#fff"/><rect x="5" y="6.2" width="3" height="2" fill="#fff"/><rect x="5" y="9" width="3" height="2" fill="#fff"/><rect x="9" y="3.3" width="3" height="2" fill="#fff"/><rect x="9" y="6.2" width="3" height="2" fill="#fff"/><rect x="9" y="9" width="3" height="2" fill="#fff"/></svg>
<div class="t" style="left:73px;top:398px;font-size:12.8px;line-height:14px">dbo.HuaiHua_DataSync</div>
<svg class="a" style="left:37px;top:421px;" width="9" height="9" viewBox="0 0 9 9"><rect x="0.5" y="0.5" width="8" height="8" fill="#fff" stroke="#a4a4a4"/><path d="M2 4.5H7M4.5 2V7" stroke="#1e3f8a" stroke-width="1"/></svg>
<svg class="a" style="left:54px;top:419px;" width="13" height="12" viewBox="0 0 13 12"><rect x="0" y="0" width="13" height="12" fill="#3a3a3a"/><rect x="1" y="3.3" width="3" height="2" fill="#fff"/><rect x="1" y="6.2" width="3" height="2" fill="#fff"/><rect x="1" y="9" width="3" height="2" fill="#fff"/><rect x="5" y="3.3" width="3" height="2" fill="#fff"/><rect x="5" y="6.2" width="3" height="2" fill="#fff"/><rect x="5" y="9" width="3" height="2" fill="#fff"/><rect x="9" y="3.3" width="3" height="2" fill="#fff"/><rect x="9" y="6.2" width="3" height="2" fill="#fff"/><rect x="9" y="9" width="3" height="2" fill="#fff"/></svg>
<div class="t" style="left:73px;top:418px;font-size:12.8px;line-height:14px">dbo.HuaiHua_Tables</div>
<svg class="a" style="left:37px;top:441px;" width="9" height="9" viewBox="0 0 9 9"><rect x="0.5" y="0.5" width="8" height="8" fill="#fff" stroke="#a4a4a4"/><path d="M2 4.5H7M4.5 2V7" stroke="#1e3f8a" stroke-width="1"/></svg>
<svg class="a" style="left:54px;top:439px;" width="13" height="12" viewBox="0 0 13 12"><rect x="0" y="0" width="13" height="12" fill="#3a3a3a"/><rect x="1" y="3.3" width="3" height="2" fill="#fff"/><rect x="1" y="6.2" width="3" height="2" fill="#fff"/><rect x="1" y="9" width="3" height="2" fill="#fff"/><rect x="5" y="3.3" width="3" height="2" fill="#fff"/><rect x="5" y="6.2" width="3" height="2" fill="#fff"/><rect x="5" y="9" width="3" height="2" fill="#fff"/><rect x="9" y="3.3" width="3" height="2" fill="#fff"/><rect x="9" y="6.2" width="3" height="2" fill="#fff"/><rect x="9" y="9" width="3" height="2" fill="#fff"/></svg>
<div class="t" style="left:73px;top:438px;font-size:12.8px;line-height:14px">dbo.HuaiHua_UploadRecord</div>
<svg class="a" style="left:37px;top:461px;" width="9" height="9" viewBox="0 0 9 9"><rect x="0.5" y="0.5" width="8" height="8" fill="#fff" stroke="#a4a4a4"/><path d="M2 4.5H7M4.5 2V7" stroke="#1e3f8a" stroke-width="1"/></svg>
<svg class="a" style="left:54px;top:459px;" width="13" height="12" viewBox="0 0 13 12"><rect x="0" y="0" width="13" height="12" fill="#3a3a3a"/><rect x="1" y="3.3" width="3" height="2" fill="#fff"/><rect x="1" y="6.2" width="3" height="2" fill="#fff"/><rect x="1" y="9" width="3" height="2" fill="#fff"/><rect x="5" y="3.3" width="3" height="2" fill="#fff"/><rect x="5" y="6.2" width="3" height="2" fill="#fff"/><rect x="5" y="9" width="3" height="2" fill="#fff"/><rect x="9" y="3.3" width="3" height="2" fill="#fff"/><rect x="9" y="6.2" width="3" height="2" fill="#fff"/><rect x="9" y="9" width="3" height="2" fill="#fff"/></svg>
<div class="t" style="left:73px;top:458px;font-size:12.8px;line-height:14px">dbo.HuaiHua2021_DataSync</div>
<svg class="a" style="left:37px;top:481px;" width="9" height="9" viewBox="0 0 9 9"><rect x="0.5" y="0.5" width="8" height="8" fill="#fff" stroke="#a4a4a4"/><path d="M2 4.5H7M4.5 2V7" stroke="#1e3f8a" stroke-width="1"/></svg>
<svg class="a" style="left:54px;top:479px;" width="13" height="12" viewBox="0 0 13 12"><rect x="0" y="0" width="13" height="12" fill="#3a3a3a"/><rect x="1" y="3.3" width="3" height="2" fill="#fff"/><rect x="1" y="6.2" width="3" height="2" fill="#fff"/><rect x="1" y="9" width="3" height="2" fill="#fff"/><rect x="5" y="3.3" width="3" height="2" fill="#fff"/><rect x="5" y="6.2" width="3" height="2" fill="#fff"/><rect x="5" y="9" width="3" height="2" fill="#fff"/><rect x="9" y="3.3" width="3" height="2" fill="#fff"/><rect x="9" y="6.2" width="3" height="2" fill="#fff"/><rect x="9" y="9" width="3" height="2" fill="#fff"/></svg>
<div class="t" style="left:73px;top:478px;font-size:12.8px;line-height:14px">dbo.HuaiHua2021_MonitorPoint</div>
<div class="a" style="left:71px;top:495px;width:132px;height:20px;background:#efefef"></div>
<svg class="a" style="left:37px;top:501px;" width="9" height="9" viewBox="0 0 9 9"><rect x="0.5" y="0.5" width="8" height="8" fill="#fff" stroke="#a4a4a4"/><path d="M2 4.5H7M4.5 2V7" stroke="#1e3f8a" stroke-width="1"/></svg>
<svg class="a" style="left:54px;top:499px;" width="13" height="12" viewBox="0 0 13 12"><rect x="0" y="0" width="13" height="12" fill="#3a3a3a"/><rect x="1" y="3.3" width="3" height="2" fill="#fff"/><rect x="1" y="6.2" width="3" height="2" fill="#fff"/><rect x="1" y="9" width="3" height="2" fill="#fff"/><rect x="5" y="3.3" width="3" height="2" fill="#fff"/><rect x="5" y="6.2" width="3" height="2" fill="#fff"/><rect x="5" y="9" width="3" height="2" fill="#fff"/><rect x="9" y="3.3" width="3" height="2" fill="#fff"/><rect x="9" y="6.2" width="3" height="2" fill="#fff"/><rect x="9" y="9" width="3" height="2" fill="#fff"/></svg>
<div class="t" style="left:73px;top:498px;font-size:12.8px;line-height:14px">dbo.HuaiHua2021_Rtu</div>
<svg class="a" style="left:37px;top:521px;" width="9" height="9" viewBox="0 0 9 9"><rect x="0.5" y="0.5" width="8" height="8" fill="#fff" stroke="#a4a4a4"/><path d="M2 4.5H7M4.5 2V7" stroke="#1e3f8a" stroke-width="1"/></svg>
<svg class="a" style="left:54px;top:519px;" width="13" height="12" viewBox="0 0 13 12"><rect x="0" y="0" width="13" height="12" fill="#3a3a3a"/><rect x="1" y="3.3" width="3" height="2" fill="#fff"/><rect x="1" y="6.2" width="3" height="2" fill="#fff"/><rect x="1" y="9" width="3" height="2" fill="#fff"/><rect x="5" y="3.3" width="3" height="2" fill="#fff"/><rect x="5" y="6.2" width="3" height="2" fill="#fff"/><rect x="5" y="9" width="3" height="2" fill="#fff"/><rect x="9" y="3.3" width="3" height="2" fill="#fff"/><rect x="9" y="6.2" width="3" height="2" fill="#fff"/><rect x="9" y="9" width="3" height="2" fill="#fff"/></svg>
<div class="t" style="left:73px;top:518px;font-size:12.8px;line-height:14px">dbo.HuaiHua2021_Sensor</div>
<svg class="a" style="left:37px;top:541px;" width="9" height="9" viewBox="0 0 9 9"><rect x="0.5" y="0.5" width="8" height="8" fill="#fff" stroke="#a4a4a4"/><path d="M2 4.5H7M4.5 2V7" stroke="#1e3f8a" stroke-width="1"/></svg>
<svg class="a" style="left:54px;top:539px;" width="13" height="12" viewBox="0 0 13 12"><rect x="0" y="0" width="13" height="12" fill="#3a3a3a"/><rect x="1" y="3.3" width="3" height="2" fill="#fff"/><rect x="1" y="6.2" width="3" height="2" fill="#fff"/><rect x="1" y="9" width="3" height="2" fill="#fff"/><rect x="5" y="3.3" width="3" height="2" fill="#fff"/><rect x="5" y="6.2" width="3" height="2" fill="#fff"/><rect x="5" y="9" width="3" height="2" fill="#fff"/><rect x="9" y="3.3" width="3" height="2" fill="#fff"/><rect x="9" y="6.2" width="3" height="2" fill="#fff"/><rect x="9" y="9" width="3" height="2" fill="#fff"/></svg>
<div class="t" style="left:73px;top:538px;font-size:12.8px;line-height:14px">dbo.HuaiHua2021_UploadRecord</div>
<svg class="a" style="left:37px;top:561px;" width="9" height="9" viewBox="0 0 9 9"><rect x="0.5" y="0.5" width="8" height="8" fill="#fff" stroke="#a4a4a4"/><path d="M2 4.5H7M4.5 2V7" stroke="#1e3f8a" stroke-width="1"/></svg>
<svg class="a" style="left:54px;top:559px;" width="13" height="12" viewBox="0 0 13 12"><rect x="0" y="0" width="13" height="12" fill="#3a3a3a"/><rect x="1" y="3.3" width="3" height="2" fill="#fff"/><rect x="1" y="6.2" width="3" height="2" fill="#fff"/><rect x="1" y="9" width="3" height="2" fill="#fff"/><rect x="5" y="3.3" width="3" height="2" fill="#fff"/><rect x="5" y="6.2" width="3" height="2" fill="#fff"/><rect x="5" y="9" width="3" height="2" fill="#fff"/><rect x="9" y="3.3" width="3" height="2" fill="#fff"/><rect x="9" y="6.2" width="3" height="2" fill="#fff"/><rect x="9" y="9" width="3" height="2" fill="#fff"/></svg>
<div class="t" style="left:73px;top:558px;font-size:12.8px;line-height:14px">dbo.HuBei_DataSync</div>
<svg class="a" style="left:37px;top:581px;" width="9" height="9" viewBox="0 0 9 9"><rect x="0.5" y="0.5" width="8" height="8" fill="#fff" stroke="#a4a4a4"/><path d="M2 4.5H7M4.5 2V7" stroke="#1e3f8a" stroke-width="1"/></svg>
<svg class="a" style="left:54px;top:579px;" width="13" height="12" viewBox="0 0 13 12"><rect x="0" y="0" width="13" height="12" fill="#3a3a3a"/><rect x="1" y="3.3" width="3" height="2" fill="#fff"/><rect x="1" y="6.2" width="3" height="2" fill="#fff"/><rect x="1" y="9" width="3" height="2" fill="#fff"/><rect x="5" y="3.3" width="3" height="2" fill="#fff"/><rect x="5" y="6.2" width="3" height="2" fill="#fff"/><rect x="5" y="9" width="3" height="2" fill="#fff"/><rect x="9" y="3.3" width="3" height="2" fill="#fff"/><rect x="9" y="6.2" width="3" height="2" fill="#fff"/><rect x="9" y="9" width="3" height="2" fill="#fff"/></svg>
<div class="t" style="left:73px;top:578px;font-size:12.8px;line-height:14px">dbo.HuBei_UploadRecord</div>
<svg class="a" style="left:37px;top:601px;" width="9" height="9" viewBox="0 0 9 9"><rect x="0.5" y="0.5" width="8" height="8" fill="#fff" stroke="#a4a4a4"/><path d="M2 4.5H7M4.5 2V7" stroke="#1e3f8a" stroke-width="1"/></svg>
<svg class="a" style="left:54px;top:599px;" width="13" height="12" viewBox="0 0 13 12"><rect x="0" y="0" width="13" height="12" fill="#3a3a3a"/><rect x="1" y="3.3" width="3" height="2" fill="#fff"/><rect x="1" y="6.2" width="3" height="2" fill="#fff"/><rect x="1" y="9" width="3" height="2" fill="#fff"/><rect x="5" y="3.3" width="3" height="2" fill="#fff"/><rect x="5" y="6.2" width="3" height="2" fill="#fff"/><rect x="5" y="9" width="3" height="2" fill="#fff"/><rect x="9" y="3.3" width="3" height="2" fill="#fff"/><rect x="9" y="6.2" width="3" height="2" fill="#fff"/><rect x="9" y="9" width="3" height="2" fill="#fff"/></svg>
<div class="t" style="left:73px;top:598px;font-size:12.8px;line-height:14px">dbo.HuBeiShiYan_DataSync</div>
<svg class="a" style="left:37px;top:621px;" width="9" height="9" viewBox="0 0 9 9"><rect x="0.5" y="0.5" width="8" height="8" fill="#fff" stroke="#a4a4a4"/><path d="M2 4.5H7M4.5 2V7" stroke="#1e3f8a" stroke-width="1"/></svg>
<svg class="a" style="left:54px;top:619px;" width="13" height="12" viewBox="0 0 13 12"><rect x="0" y="0" width="13" height="12" fill="#3a3a3a"/><rect x="1" y="3.3" width="3" height="2" fill="#fff"/><rect x="1" y="6.2" width="3" height="2" fill="#fff"/><rect x="1" y="9" width="3" height="2" fill="#fff"/><rect x="5" y="3.3" width="3" height="2" fill="#fff"/><rect x="5" y="6.2" width="3" height="2" fill="#fff"/><rect x="5" y="9" width="3" height="2" fill="#fff"/><rect x="9" y="3.3" width="3" height="2" fill="#fff"/><rect x="9" y="6.2" width="3" height="2" fill="#fff"/><rect x="9" y="9" width="3" height="2" fill="#fff"/></svg>
<div class="t" style="left:73px;top:618px;font-size:12.8px;line-height:14px">dbo.HuBeiShiYan_Device</div>
<svg class="a" style="left:37px;top:641px;" width="9" height="9" viewBox="0 0 9 9"><rect x="0.5" y="0.5" width="8" height="8" fill="#fff" stroke="#a4a4a4"/><path d="M2 4.5H7M4.5 2V7" stroke="#1e3f8a" stroke-width="1"/></svg>
<svg class="a" style="left:54px;top:639px;" width="13" height="12" viewBox="0 0 13 12"><rect x="0" y="0" width="13" height="12" fill="#3a3a3a"/><rect x="1" y="3.3" width="3" height="2" fill="#fff"/><rect x="1" y="6.2" width="3" height="2" fill="#fff"/><rect x="1" y="9" width="3" height="2" fill="#fff"/><rect x="5" y="3.3" width="3" height="2" fill="#fff"/><rect x="5" y="6.2" width="3" height="2" fill="#fff"/><rect x="5" y="9" width="3" height="2" fill="#fff"/><rect x="9" y="3.3" width="3" height="2" fill="#fff"/><rect x="9" y="6.2" width="3" height="2" fill="#fff"/><rect x="9" y="9" width="3" height="2" fill="#fff"/></svg>
<div class="t" style="left:73px;top:638px;font-size:12.8px;line-height:14px">dbo.HuBeiShiYan_MonitorPoint</div>
<svg class="a" style="left:37px;top:661px;" width="9" height="9" viewBox="0 0 9 9"><rect x="0.5" y="0.5" width="8" height="8" fill="#fff" stroke="#a4a4a4"/><path d="M2 4.5H7M4.5 2V7" stroke="#1e3f8a" stroke-width="1"/></svg>
<svg class="a" style="left:54px;top:659px;" width="13" height="12" viewBox="0 0 13 12"><rect x="0" y="0" width="13" height="12" fill="#3a3a3a"/><rect x="1" y="3.3" width="3" height="2" fill="#fff"/><rect x="1" y="6.2" width="3" height="2" fill="#fff"/><rect x="1" y="9" width="3" height="2" fill="#fff"/><rect x="5" y="3.3" width="3" height="2" fill="#fff"/><rect x="5" y="6.2" width="3" height="2" fill="#fff"/><rect x="5" y="9" width="3" height="2" fill="#fff"/><rect x="9" y="3.3" width="3" height="2" fill="#fff"/><rect x="9" y="6.2" width="3" height="2" fill="#fff"/><rect x="9" y="9" width="3" height="2" fill="#fff"/></svg>
<div class="t" style="left:73px;top:658px;font-size:12.8px;line-height:14px">dbo.HuBeiShiYan_UploadRecord</div>
<svg class="a" style="left:37px;top:681px;" width="9" height="9" viewBox="0 0 9 9"><rect x="0.5" y="0.5" width="8" height="8" fill="#fff" stroke="#a4a4a4"/><path d="M2 4.5H7M4.5 2V7" stroke="#1e3f8a" stroke-width="1"/></svg>
<svg class="a" style="left:54px;top:679px;" width="13" height="12" viewBox="0 0 13 12"><rect x="0" y="0" width="13" height="12" fill="#3a3a3a"/><rect x="1" y="3.3" width="3" height="2" fill="#fff"/><rect x="1" y="6.2" width="3" height="2" fill="#fff"/><rect x="1" y="9" width="3" height="2" fill="#fff"/><rect x="5" y="3.3" width="3" height="2" fill="#fff"/><rect x="5" y="6.2" width="3" height="2" fill="#fff"/><rect x="5" y="9" width="3" height="2" fill="#fff"/><rect x="9" y="3.3" width="3" height="2" fill="#fff"/><rect x="9" y="6.2" width="3" height="2" fill="#fff"/><rect x="9" y="9" width="3" height="2" fill="#fff"/></svg>
<div class="t" style="left:73px;top:678px;font-size:12.8px;line-height:14px">dbo.HuNanWK_DataSync</div>
<svg class="a" style="left:37px;top:701px;" width="9" height="9" viewBox="0 0 9 9"><rect x="0.5" y="0.5" width="8" height="8" fill="#fff" stroke="#a4a4a4"/><path d="M2 4.5H7M4.5 2V7" stroke="#1e3f8a" stroke-width="1"/></svg>
<svg class="a" style="left:54px;top:699px;" width="13" height="12" viewBox="0 0 13 12"><rect x="0" y="0" width="13" height="12" fill="#3a3a3a"/><rect x="1" y="3.3" width="3" height="2" fill="#fff"/><rect x="1" y="6.2" width="3" height="2" fill="#fff"/><rect x="1" y="9" width="3" height="2" fill="#fff"/><rect x="5" y="3.3" width="3" height="2" fill="#fff"/><rect x="5" y="6.2" width="3" height="2" fill="#fff"/><rect x="5" y="9" width="3" height="2" fill="#fff"/><rect x="9" y="3.3" width="3" height="2" fill="#fff"/><rect x="9" y="6.2" width="3" height="2" fill="#fff"/><rect x="9" y="9" width="3" height="2" fill="#fff"/></svg>
<div class="t" style="left:73px;top:698px;font-size:12.8px;line-height:14px">dbo.HuNanWK_ProjectBaseConfig</div>
<svg class="a" style="left:37px;top:721px;" width="9" height="9" viewBox="0 0 9 9"><rect x="0.5" y="0.5" width="8" height="8" fill="#fff" stroke="#a4a4a4"/><path d="M2 4.5H7M4.5 2V7" stroke="#1e3f8a" stroke-width="1"/></svg>
<svg class="a" style="left:54px;top:719px;" width="13" height="12" viewBox="0 0 13 12"><rect x="0" y="0" width="13" height="12" fill="#3a3a3a"/><rect x="1" y="3.3" width="3" height="2" fill="#fff"/><rect x="1" y="6.2" width="3" height="2" fill="#fff"/><rect x="1" y="9" width="3" height="2" fill="#fff"/><rect x="5" y="3.3" width="3" height="2" fill="#fff"/><rect x="5" y="6.2" width="3" height="2" fill="#fff"/><rect x="5" y="9" width="3" height="2" fill="#fff"/><rect x="9" y="3.3" width="3" height="2" fill="#fff"/><rect x="9" y="6.2" width="3" height="2" fill="#fff"/><rect x="9" y="9" width="3" height="2" fill="#fff"/></svg>
<div class="t" style="left:73px;top:718px;font-size:12.8px;line-height:14px">dbo.HuNanWK_UploadRecord</div>
<svg class="a" style="left:37px;top:741px;" width="9" height="9" viewBox="0 0 9 9"><rect x="0.5" y="0.5" width="8" height="8" fill="#fff" stroke="#a4a4a4"/><path d="M2 4.5H7M4.5 2V7" stroke="#1e3f8a" stroke-width="1"/></svg>
<svg class="a" style="left:54px;top:739px;" width="13" height="12" viewBox="0 0 13 12"><rect x="0" y="0" width="13" height="12" fill="#3a3a3a"/><rect x="1" y="3.3" width="3" height="2" fill="#fff"/><rect x="1" y="6.2" width="3" height="2" fill="#fff"/><rect x="1" y="9" width="3" height="2" fill="#fff"/><rect x="5" y="3.3" width="3" height="2" fill="#fff"/><rect x="5" y="6.2" width="3" height="2" fill="#fff"/><rect x="5" y="9" width="3" height="2" fill="#fff"/><rect x="9" y="3.3" width="3" height="2" fill="#fff"/><rect x="9" y="6.2" width="3" height="2" fill="#fff"/><rect x="9" y="9" width="3" height="2" fill="#fff"/></svg>
<div class="t" style="left:73px;top:738px;font-size:12.8px;line-height:14px">dbo.NaturalCountry_DataSync</div>
<svg class="a" style="left:37px;top:761px;" width="9" height="9" viewBox="0 0 9 9"><rect x="0.5" y="0.5" width="8" height="8" fill="#fff" stroke="#a4a4a4"/><path d="M2 4.5H7M4.5 2V7" stroke="#1e3f8a" stroke-width="1"/></svg>
<svg class="a" style="left:54px;top:759px;" width="13" height="12" viewBox="0 0 13 12"><rect x="0" y="0" width="13" height="12" fill="#3a3a3a"/><rect x="1" y="3.3" width="3" height="2" fill="#fff"/><rect x="1" y="6.2" width="3" height="2" fill="#fff"/><rect x="1" y="9" width="3" height="2" fill="#fff"/><rect x="5" y="3.3" width="3" height="2" fill="#fff"/><rect x="5" y="6.2" width="3" height="2" fill="#fff"/><rect x="5" y="9" width="3" height="2" fill="#fff"/><rect x="9" y="3.3" width="3" height="2" fill="#fff"/><rect x="9" y="6.2" width="3" height="2" fill="#fff"/><rect x="9" y="9" width="3" height="2" fill="#fff"/></svg>
<div class="t" style="left:73px;top:758px;font-size:12.8px;line-height:14px">dbo.NaturalCountry_UploadRecord</div>
<svg class="a" style="left:37px;top:781px;" width="9" height="9" viewBox="0 0 9 9"><rect x="0.5" y="0.5" width="8" height="8" fill="#fff" stroke="#a4a4a4"/><path d="M2 4.5H7M4.5 2V7" stroke="#1e3f8a" stroke-width="1"/></svg>
<svg class="a" style="left:54px;top:779px;" width="13" height="12" viewBox="0 0 13 12"><rect x="0" y="0" width="13" height="12" fill="#3a3a3a"/><rect x="1" y="3.3" width="3" height="2" fill="#fff"/><rect x="1" y="6.2" width="3" height="2" fill="#fff"/><rect x="1" y="9" width="3" height="2" fill="#fff"/><rect x="5" y="3.3" width="3" height="2" fill="#fff"/><rect x="5" y="6.2" width="3" height="2" fill="#fff"/><rect x="5" y="9" width="3" height="2" fill="#fff"/><rect x="9" y="3.3" width="3" height="2" fill="#fff"/><rect x="9" y="6.2" width="3" height="2" fill="#fff"/><rect x="9" y="9" width="3" height="2" fill="#fff"/></svg>
<div class="t" style="left:73px;top:778px;font-size:12.8px;line-height:14px">dbo.OutlineLog_CQ</div>
<svg class="a" style="left:37px;top:801px;" width="9" height="9" viewBox="0 0 9 9"><rect x="0.5" y="0.5" width="8" height="8" fill="#fff" stroke="#a4a4a4"/><path d="M2 4.5H7M4.5 2V7" stroke="#1e3f8a" stroke-width="1"/></svg>
<svg class="a" style="left:54px;top:799px;" width="13" height="12" viewBox="0 0 13 12"><rect x="0" y="0" width="13" height="12" fill="#3a3a3a"/><rect x="1" y="3.3" width="3" height="2" fill="#fff"/><rect x="1" y="6.2" width="3" height="2" fill="#fff"/><rect x="1" y="9" width="3" height="2" fill="#fff"/><rect x="5" y="3.3" width="3" height="2" fill="#fff"/><rect x="5" y="6.2" width="3" height="2" fill="#fff"/><rect x="5" y="9" width="3" height="2" fill="#fff"/><rect x="9" y="3.3" width="3" height="2" fill="#fff"/><rect x="9" y="6.2" width="3" height="2" fill="#fff"/><rect x="9" y="9" width="3" height="2" fill="#fff"/></svg>
<div class="t" style="left:73px;top:798px;font-size:12.8px;line-height:14px">dbo.OutlineLog_GZ</div>
<div class="a" style="left:37px;top:450px;width:220px;height:30px;border:3px solid #f01c1c;border-radius:3px"></div>
<div class="a" style="left:331px;top:103px;width:6px;height:711px;background:linear-gradient(to bottom,#293955 0px,#293955 60px,#2e4062 250px,#364b70 711px)"></div>
<div class="a" style="left:337px;top:126px;width:1px;height:688px;background:#aab4cc"></div>
<div class="a" style="left:337px;top:103px;width:268px;height:21px;background:#364e6f"></div>
<div class="t" style="left:342px;top:109px;font-size:12.7px;line-height:13px;color:#fff">SQLQuery3.sql - 4...nector (sa (328))*</div>
<div class="a" style="left:605px;top:103px;width:266px;height:21px;background:#fff29d"></div>
<div class="t" style="left:609px;top:109px;font-size:12.7px;line-height:13px;color:#1e1e1e">SQLQuery1.sql - 4...nector (sa (267))*</div>
<svg class="a" style="left:836px;top:110px;" width="9" height="9" viewBox="0 0 9 9"><path d="M0 4.5H4M3.6 1.5V7.5M3.6 2.2H8.4V6.8H3.6" stroke="#4e4838" stroke-width="1.2" fill="none"/></svg>
<svg class="a" style="left:854px;top:110px;" width="10" height="10" viewBox="0 0 10 10"><path d="M0.7 0.7L9.3 9.3M9.3 0.7L0.7 9.3" stroke="#5e5842" stroke-width="1.3"/></svg>
<div class="a" style="left:337px;top:124px;width:1491px;height:2px;background:#fff29d"></div>
<div class="a" style="left:337px;top:126px;width:1491px;height:419px;background:#fff"></div>
<div class="a" style="left:337px;top:126px;width:18px;height:419px;background:#e6e7e8"></div>
<div class="a" style="left:370px;top:127px;width:1px;height:160px;background:#a5a5a5"></div>
<div class="a" style="left:370px;top:286px;width:5px;height:1px;background:#a5a5a5"></div>
<div class="a" style="left:357px;top:241px;width:6px;height:46px;background:#fde658"></div>
<div class="a" style="left:374px;top:264px;width:1454px;height:23px;border:2px solid #e6e6ef;border-right:none"></div>
<div class="code" style="left:434.5px;top:128px;color:#808080">,</div>
<div class="code" style="left:444.6px;top:128px;color:#000">[ProjectName]</div>
<div class="code" style="left:434.5px;top:151px;color:#808080">,</div>
<div class="code" style="left:444.6px;top:151px;color:#000">[SolveMode]</div>
<div class="code" style="left:434.5px;top:174px;color:#808080">,</div>
<div class="code" style="left:444.6px;top:174px;color:#000">[BaseX]</div>
<div class="code" style="left:434.5px;top:197px;color:#808080">,</div>
<div class="code" style="left:444.6px;top:197px;color:#000">[BaseY]</div>
<div class="code" style="left:434.5px;top:220px;color:#808080">,</div>
<div class="code" style="left:444.6px;top:220px;color:#000">[BaseH]</div>
<div class="code" style="left:394.3px;top:243px;color:#0000ff">FROM</div>
<div class="code" style="left:444.6px;top:243px;color:#000">[DataSyncPushConnector]</div>
<div class="code" style="left:675.7px;top:243px;color:#808080">.</div>
<div class="code" style="left:685.8px;top:243px;color:#000">[dbo]</div>
<div class="code" style="left:736.0px;top:243px;color:#808080">.</div>
<div class="code" style="left:746.0px;top:243px;color:#000">[HuaiHua2021_DataSync]</div>
<div class="code" style="left:394.3px;top:266px;color:#0000ff">where</div>
<div class="code" style="left:454.6px;top:266px;color:#000">DeviceCode</div>
<div class="code" style="left:555.1px;top:266px;color:#808080">=</div>
<div class="code" style="left:565.2px;top:266px;color:#ff0000">'4312230111410501'</div>
<div class="a" style="left:440px;top:235px;width:242px;height:31px;border:3px solid #f01c1c;border-radius:4px"></div>
<div class="a" style="left:337px;top:545px;width:1491px;height:17px;background:#e6e7ed"></div>
<div class="a" style="left:338px;top:545px;width:60px;height:17px;background:#fff;border:1px solid #b8c2d8"></div>
<div class="t" style="left:341px;top:549px;font-size:11px;line-height:11px">100 %</div>
<svg class="a" style="left:389px;top:552px;" width="6" height="4" viewBox="0 0 6 4"><path d="M0 0H6L3 3.5Z" fill="#1e1e1e"/></svg>
<svg class="a" style="left:403px;top:549px;" width="5" height="9" viewBox="0 0 5 9"><path d="M5 0V9L0 4.5Z" fill="#c4c8d2"/></svg>
<div class="a" style="left:337px;top:562px;width:1491px;height:252px;background:#f0f0f0"></div>
<div class="a" style="left:338px;top:566px;width:62px;height:23px;background:#fdfdfd;border:1px solid #dcdcdc;border-bottom:none"></div>
<svg class="a" style="left:348px;top:570px;" width="13" height="12" viewBox="0 0 13 12"><rect x="0" y="0" width="13" height="12" fill="#3a3a3a"/><rect x="1" y="3.3" width="3" height="2" fill="#fff"/><rect x="1" y="6.2" width="3" height="2" fill="#fff"/><rect x="1" y="9" width="3" height="2" fill="#fff"/><rect x="5" y="3.3" width="3" height="2" fill="#fff"/><rect x="5" y="6.2" width="3" height="2" fill="#fff"/><rect x="5" y="9" width="3" height="2" fill="#fff"/><rect x="9" y="3.3" width="3" height="2" fill="#fff"/><rect x="9" y="6.2" width="3" height="2" fill="#fff"/><rect x="9" y="9" width="3" height="2" fill="#fff"/></svg>
<div class="t" style="left:367px;top:571px;font-size:12.3px;line-height:13px">结果</div>
<div class="a" style="left:400px;top:568px;width:54px;height:21px;background:#ececec;border:1px solid #d9d9d9;border-bottom:none"></div>
<svg class="a" style="left:404px;top:571px;" width="16" height="15" viewBox="0 0 16 15"><rect x="8" y="0" width="7" height="11" fill="#3a3a3a"/><path d="M9 2H14M9 4H14" stroke="#fff" stroke-width="1"/><rect x="12" y="8.5" width="1.3" height="1.3" fill="#fff"/><path d="M0.6 4.6H6L8.4 7V13.9H0.6Z" fill="#fff" stroke="#3a3a3a" stroke-width="1.2"/><path d="M2 8.5H6.5M2 10.5H6.5M2 12.4H6.5" stroke="#3a3a3a" stroke-width="0.9"/></svg>
<div class="t" style="left:426px;top:573px;font-size:12.3px;line-height:13px">消息</div>
<div class="a" style="left:338px;top:588px;width:1490px;height:226px;background:#fff"></div>
<div class="a" style="left:342px;top:589px;width:1486px;height:225px;background:#fff;border-top:1px solid #a9adb8;border-left:1px solid #a9adb8"></div>
<div class="a" style="left:939px;top:611px;width:61px;height:20px;background:#ffffe1"></div>
<div class="a" style="left:1807px;top:611px;width:21px;height:20px;background:#ffffe1"></div>
<div class="a" style="left:1635px;top:611px;width:73px;height:20px;background:#a6cdf0"></div>
<div class="a" style="left:939px;top:632px;width:61px;height:20px;background:#ffffe1"></div>
<div class="a" style="left:1807px;top:632px;width:21px;height:20px;background:#ffffe1"></div>
<div class="a" style="left:1635px;top:632px;width:73px;height:20px;background:#a6cdf0"></div>
<div class="a" style="left:939px;top:653px;width:61px;height:20px;background:#ffffe1"></div>
<div class="a" style="left:1807px;top:653px;width:21px;height:20px;background:#ffffe1"></div>
<div class="a" style="left:1635px;top:653px;width:73px;height:20px;background:#a6cdf0"></div>
<div class="a" style="left:939px;top:674px;width:61px;height:20px;background:#ffffe1"></div>
<div class="a" style="left:1807px;top:674px;width:21px;height:20px;background:#ffffe1"></div>
<div class="a" style="left:1635px;top:674px;width:73px;height:20px;background:#a6cdf0"></div>
<div class="a" style="left:343px;top:610px;width:1485px;height:1px;background:#e9e9e9"></div>
<div class="a" style="left:343px;top:631px;width:1485px;height:1px;background:#e9e9e9"></div>
<div class="a" style="left:343px;top:652px;width:1485px;height:1px;background:#e9e9e9"></div>
<div class="a" style="left:343px;top:673px;width:1485px;height:1px;background:#e9e9e9"></div>
<div class="a" style="left:343px;top:694px;width:1485px;height:1px;background:#e9e9e9"></div>
<div class="a" style="left:381px;top:591px;width:1px;height:103px;background:#e9e9e9"></div>
<div class="a" style="left:420px;top:591px;width:1px;height:103px;background:#e9e9e9"></div>
<div class="a" style="left:512px;top:591px;width:1px;height:103px;background:#e9e9e9"></div>
<div class="a" style="left:586px;top:591px;width:1px;height:103px;background:#e9e9e9"></div>
<div class="a" style="left:696px;top:591px;width:1px;height:103px;background:#e9e9e9"></div>
<div class="a" style="left:938px;top:591px;width:1px;height:103px;background:#e9e9e9"></div>
<div class="a" style="left:1000px;top:591px;width:1px;height:103px;background:#e9e9e9"></div>
<div class="a" style="left:1110px;top:591px;width:1px;height:103px;background:#e9e9e9"></div>
<div class="a" style="left:1184px;top:591px;width:1px;height:103px;background:#e9e9e9"></div>
<div class="a" style="left:1246px;top:591px;width:1px;height:103px;background:#e9e9e9"></div>
<div class="a" style="left:1320px;top:591px;width:1px;height:103px;background:#e9e9e9"></div>
<div class="a" style="left:1634px;top:591px;width:1px;height:103px;background:#e9e9e9"></div>
<div class="a" style="left:1708px;top:591px;width:1px;height:103px;background:#e9e9e9"></div>
<div class="a" style="left:1806px;top:591px;width:1px;height:103px;background:#e9e9e9"></div>
<div class="a" style="left:1634px;top:611px;width:75px;height:21px;border:1px dotted #000"></div>
<div class="gh" style="left:385.5px;top:597px">Id</div>
<div class="gh" style="left:423.5px;top:597px">MyStationCode</div>
<div class="gh" style="left:516px;top:597px">MyDeviceId</div>
<div class="gh" style="left:589.5px;top:597px">MyDeviceSn</div>
<div class="gh" style="left:700px;top:597px">MyDeviceName</div>
<div class="gh" style="left:941.5px;top:597px">Position</div>
<div class="gh" style="left:1005px;top:597px">DeviceCode</div>
<div class="gh" style="left:1115px;top:597px">DeviceName</div>
<div class="gh" style="left:1188.5px;top:597px">DeviceId</div>
<div class="gh" style="left:1250.5px;top:597px">DeviceType</div>
<div class="gh" style="left:1324px;top:597px">Params</div>
<div class="gh" style="left:1638.5px;top:597px">NeedUpload</div>
<div class="gh" style="left:1713.5px;top:597px">UploadInterval</div>
<div class="gh" style="left:1810px;top:597px">MyDeviceSn</div>
<div class="g" style="left:348px;top:617px">1</div>
<div class="g" style="left:388px;top:617px">1059</div>
<div class="g" style="left:426.5px;top:617px">S00002871</div>
<div class="g" style="left:518.5px;top:617px">5569</div>
<div class="g" style="left:593.5px;top:617px">1F240D1100000095</div>
<div class="t" style="left:703px;top:616px;font-size:11.5px;line-height:13px">辰溪县黄溪口芙蓉村1组山体滑坡5号倾角</div>
<div class="g" style="left:944.5px;top:617px">NULL</div>
<div class="g" style="left:1007px;top:617px">4312230111410501</div>
<div class="g" style="left:1117px;top:617px">L1_QJ_1</div>
<div class="g" style="left:1190.5px;top:617px">5569</div>
<div class="g" style="left:1252.5px;top:617px">11</div>
<div class="g" style="left:1327px;top:617px">{&quot;X&quot;:48,&quot;Y&quot;:49,&quot;Z&quot;:324}</div>
<div class="g" style="left:1640.5px;top:617px">0</div>
<div class="g" style="left:1715px;top:617px">60</div>
<div class="g" style="left:1813px;top:617px">NULL</div>
<div class="g" style="left:348px;top:638px">2</div>
<div class="g" style="left:388px;top:638px">1060</div>
<div class="g" style="left:426.5px;top:638px">S00002871</div>
<div class="g" style="left:518.5px;top:638px">5568</div>
<div class="g" style="left:593.5px;top:638px">1F240D1100000095</div>
<div class="t" style="left:703px;top:637px;font-size:11.5px;line-height:13px">辰溪县黄溪口芙蓉村1组山体滑坡5号裂缝</div>
<div class="g" style="left:944.5px;top:638px">NULL</div>
<div class="g" style="left:1007px;top:638px">4312230111410501</div>
<div class="g" style="left:1117px;top:638px">L1_LF_1</div>
<div class="g" style="left:1190.5px;top:638px">5568</div>
<div class="g" style="left:1252.5px;top:638px">9</div>
<div class="g" style="left:1327px;top:638px">{&quot;value&quot;:118}</div>
<div class="g" style="left:1640.5px;top:638px">0</div>
<div class="g" style="left:1715px;top:638px">60</div>
<div class="g" style="left:1813px;top:638px">NULL</div>
<div class="g" style="left:348px;top:659px">3</div>
<div class="g" style="left:388px;top:659px">1061</div>
<div class="g" style="left:426.5px;top:659px">S00002871</div>
<div class="g" style="left:518.5px;top:659px">5570</div>
<div class="g" style="left:593.5px;top:659px">1F240D1100000095</div>
<div class="t" style="left:703px;top:658px;font-size:11.5px;line-height:13px">辰溪县黄溪口芙蓉村1组山体滑坡5号加速度</div>
<div class="g" style="left:944.5px;top:659px">NULL</div>
<div class="g" style="left:1007px;top:659px">4312230111410501</div>
<div class="g" style="left:1117px;top:659px">L1_JS_1</div>
<div class="g" style="left:1190.5px;top:659px">5570</div>
<div class="g" style="left:1252.5px;top:659px">10</div>
<div class="g" style="left:1327px;top:659px">{&quot;gX&quot;:314,&quot;gY&quot;:315,&quot;gZ&quot;:316}</div>
<div class="g" style="left:1640.5px;top:659px">0</div>
<div class="g" style="left:1715px;top:659px">60</div>
<div class="g" style="left:1813px;top:659px">NULL</div>
<div class="g" style="left:348px;top:680px">4</div>
<div class="g" style="left:388px;top:680px">1062</div>
<div class="g" style="left:426.5px;top:680px">S00002871</div>
<div class="g" style="left:518.5px;top:680px">6182</div>
<div class="g" style="left:593.5px;top:680px">1F240D1100000095</div>
<div class="t" style="left:703px;top:679px;font-size:11.5px;line-height:13px">辰溪县黄溪口芙蓉村1组山体滑坡5号状态</div>
<div class="g" style="left:944.5px;top:680px">NULL</div>
<div class="g" style="left:1007px;top:680px">4312230111410501</div>
<div class="g" style="left:1117px;top:680px">S1_ZT_1</div>
<div class="g" style="left:1190.5px;top:680px">6182</div>
<div class="g" style="left:1252.5px;top:680px">13</div>
<div class="g" style="left:1327px;top:680px">{&quot;ext_power_volt&quot;:418,&quot;solar_volt&quot;:419,&quot;battery...</div>
<div class="g" style="left:1640.5px;top:680px">0</div>
<div class="g" style="left:1715px;top:680px">60</div>
<div class="g" style="left:1813px;top:680px">NULL</div>
<div class="a" style="left:1620px;top:572px;width:94px;height:156px;border:3px solid #f01c1c;border-radius:3px"></div>
<div class="a" style="left:0px;top:0px;width:4px;height:814px;background:#0b5bc4"></div>
<div class="a" style="left:0px;top:20px;width:4px;height:30px;background:#7fa6b8;opacity:0.6"></div>
<div class="a" style="left:0px;top:68px;width:4px;height:14px;background:#dfe6f0;opacity:0.6"></div>
<div class="a" style="left:0px;top:85px;width:4px;height:15px;background:#c8ccd4;opacity:0.6"></div>
<div class="a" style="left:0px;top:110px;width:4px;height:15px;background:#e8eef6;opacity:0.6"></div>
<div class="a" style="left:0px;top:150px;width:4px;height:17px;background:#dfe6f0;opacity:0.6"></div>
<div class="a" style="left:0px;top:205px;width:4px;height:10px;background:#7cc4e8;opacity:0.6"></div>
<div class="a" style="left:0px;top:240px;width:4px;height:10px;background:#e0e8f0;opacity:0.6"></div>
<div class="a" style="left:0px;top:295px;width:4px;height:10px;background:#d8a040;opacity:0.6"></div>
<div class="a" style="left:0px;top:325px;width:4px;height:10px;background:#e0e8f0;opacity:0.6"></div>
<div class="a" style="left:0px;top:345px;width:4px;height:10px;background:#e0e8f0;opacity:0.6"></div>
<div class="a" style="left:0px;top:385px;width:4px;height:10px;background:#d8b050;opacity:0.6"></div>
<div class="a" style="left:0px;top:405px;width:4px;height:10px;background:#e0e8f0;opacity:0.6"></div>
<div class="a" style="left:0px;top:450px;width:4px;height:25px;background:#a8cce8;opacity:0.6"></div>
<div class="a" style="left:0px;top:490px;width:4px;height:10px;background:#e0e8f0;opacity:0.6"></div>
<div class="a" style="left:0px;top:540px;width:4px;height:15px;background:#d0d8e0;opacity:0.6"></div>
<div class="a" style="left:0px;top:570px;width:4px;height:10px;background:#e0e8f0;opacity:0.6"></div>
<div class="a" style="left:0px;top:590px;width:4px;height:10px;background:#e0e8f0;opacity:0.6"></div>
<div class="a" style="left:0px;top:620px;width:4px;height:25px;background:#a8c8e8;opacity:0.6"></div>
<div class="a" style="left:0px;top:660px;width:4px;height:10px;background:#e0e8f0;opacity:0.6"></div>
<div class="a" style="left:0px;top:705px;width:4px;height:30px;background:#d8a848;opacity:0.6"></div>
<div class="a" style="left:0px;top:745px;width:4px;height:10px;background:#e0e8f0;opacity:0.6"></div>
<div class="a" style="left:0px;top:785px;width:4px;height:29px;background:#e0c050;opacity:0.6"></div>
<div class="a" style="left:1828px;top:0px;width:7px;height:814px;background:#0b4a96"></div>
<div class="a" style="left:1829px;top:39px;width:5px;height:7px;background:#e8f0e8;opacity:0.5"></div>
<div class="a" style="left:1829px;top:72px;width:5px;height:4px;background:#e8eef6;opacity:0.5"></div>
<div class="a" style="left:1829px;top:114px;width:5px;height:16px;background:#f0e0d8;opacity:0.5"></div>
<div class="a" style="left:1829px;top:157px;width:5px;height:16px;background:#c8d8ec;opacity:0.5"></div>
<div class="a" style="left:1829px;top:207px;width:5px;height:16px;background:#d8e4f4;opacity:0.5"></div>
<div class="a" style="left:1829px;top:240px;width:5px;height:8px;background:#e0e8f0;opacity:0.5"></div>
<div class="a" style="left:1829px;top:292px;width:5px;height:16px;background:#eaeaea;opacity:0.5"></div>
<div class="a" style="left:1829px;top:327px;width:5px;height:6px;background:#d8e0ec;opacity:0.5"></div>
<div class="a" style="left:1829px;top:367px;width:5px;height:31px;background:#7a3c8c;opacity:0.5"></div>
<div class="a" style="left:1829px;top:407px;width:5px;height:26px;background:#d0d8e8;opacity:0.5"></div>
<div class="a" style="left:1829px;top:452px;width:5px;height:26px;background:#e8e0ec;opacity:0.5"></div>
<div class="a" style="left:1829px;top:492px;width:5px;height:6px;background:#d8e0ec;opacity:0.5"></div>
<div class="a" style="left:1829px;top:537px;width:5px;height:26px;background:#e83030;opacity:0.5"></div>
<div class="a" style="left:1829px;top:572px;width:5px;height:6px;background:#d8e0ec;opacity:0.5"></div>
<div class="a" style="left:1829px;top:597px;width:5px;height:6px;background:#d8e0ec;opacity:0.5"></div>
<div class="a" style="left:1829px;top:622px;width:5px;height:16px;background:#e03030;opacity:0.5"></div>
<div class="a" style="left:1829px;top:657px;width:5px;height:6px;background:#d8e0ec;opacity:0.5"></div>
<div class="a" style="left:1829px;top:707px;width:5px;height:21px;background:#e8e8e8;opacity:0.5"></div>
<div class="a" style="left:1829px;top:737px;width:5px;height:6px;background:#d8e0ec;opacity:0.5"></div>
<div class="a" style="left:1829px;top:787px;width:5px;height:25px;background:#e8d040;opacity:0.5"></div>
</body></html>
